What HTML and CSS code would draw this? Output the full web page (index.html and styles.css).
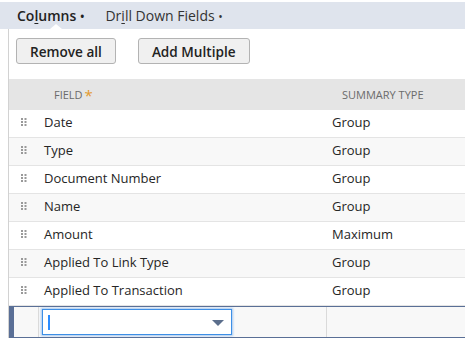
FILE: index.html
```html
<!DOCTYPE html>
<html lang="en">
<head>
  <meta charset="UTF-8" />
  <title>Columns</title>
  <link rel="stylesheet" href="styles.css">
</head>
<body>
  <nav class="tabs">
    <div class="tab active">Co<u>l</u>umns <span class="dot">•</span></div>
    <div class="tab">Dr<u>i</u>ll Down Fields <span class="dot">•</span></div>
  </nav>

  <section class="panel">
    <div class="toolbar">
      <button class="btn">Remove all</button>
      <button class="btn">Add Multiple</button>
    </div>

    <div class="grid">
      <div class="row head">
        <div class="cell"></div>
        <div class="cell">Field<span class="req">*</span></div>
        <div class="cell">Summary Type</div>
      </div>
      <div class="row"><div class="cell handle"><span class="grip"></span></div><div class="cell">Date</div><div class="cell">Group</div></div>
      <div class="row"><div class="cell handle"><span class="grip"></span></div><div class="cell">Type</div><div class="cell">Group</div></div>
      <div class="row"><div class="cell handle"><span class="grip"></span></div><div class="cell">Document Number</div><div class="cell">Group</div></div>
      <div class="row"><div class="cell handle"><span class="grip"></span></div><div class="cell">Name</div><div class="cell">Group</div></div>
      <div class="row"><div class="cell handle"><span class="grip"></span></div><div class="cell">Amount</div><div class="cell">Maximum</div></div>
      <div class="row"><div class="cell handle"><span class="grip"></span></div><div class="cell">Applied To Link Type</div><div class="cell">Group</div></div>
      <div class="row"><div class="cell handle"><span class="grip"></span></div><div class="cell">Applied To Transaction</div><div class="cell">Group</div></div>
      <div class="row editing">
        <div class="cell handle"></div>
        <div class="cell">
          <div class="select">
            <span class="caret"></span>
            <svg class="arrow" width="12" height="6" viewBox="0 0 12 6"><path d="M0 0h12L6 6z" fill="#5b6e8c"/></svg>
          </div>
        </div>
        <div class="cell"></div>
      </div>
    </div>
  </section>
</body>
</html>
```

FILE: styles.css
```css
:root {
  --tab-bg: #dfe4ed;
  --line: #e4e4e4;
  --text: #262626;
  --muted: #6b6b6b;
  --edit: #5a6f96;
  --focus: #3d8fe6;
}

* {
  margin: 0;
  padding: 0;
  box-sizing: border-box;
}

body {
  font-family: 'Open Sans', sans-serif;
  color: var(--text);
  background: #fff;
  width: 465px;
  height: 338px;
  overflow: hidden;
}

.tabs {
  margin-top: 2px;
  height: 27px;
  background: var(--tab-bg);
  display: flex;
  align-items: center;
  padding-left: 17px;
  gap: 21px;
  font-size: 14px;
}

.tab {
  position: relative;
  color: #333;
  white-space: nowrap;
}

.tab u {
  text-decoration-thickness: 1px;
  text-underline-offset: 2px;
}

.tab .dot {
  font-size: 12px;
}

.tab.active {
  font-weight: 600;
  color: #222;
}

.tab.active::after {
  content: "";
  position: absolute;
  left: 33px;
  bottom: -4px;
  border: 6px solid transparent;
  border-bottom: 5px solid #fff;
  border-top: 0;
}

.panel {
  margin-left: 8px;
  border-left: 1px solid #d2d2d2;
  height: 309px;
}

.toolbar {
  display: flex;
  gap: 22px;
  padding: 9px 7px 15px;
}

.btn {
  height: 26px;
  padding: 0 13px;
  font-family: 'Open Sans', sans-serif;
  font-size: 13.6px;
  font-weight: 600;
  color: #222;
  background: #f0f0f0;
  border: 1px solid #b3b3b3;
  border-radius: 3px;
}

.grid {
  width: 470px;
  font-size: 13px;
}

.row {
  display: grid;
  grid-template-columns: 29px 288px 1fr;
  height: 28px;
  border-bottom: 1px solid var(--line);
}

.row:nth-child(odd) {
  background: #f8f8f8;
}

.cell {
  display: flex;
  align-items: center;
  padding: 0 0 3px 6px;
  white-space: nowrap;
}

.row.head {
  height: 31px;
  background: #e5e5e5;
  border-bottom: 0;
  font-size: 11px;
  color: var(--muted);
  text-transform: uppercase;
}

.row.head .cell {
  padding-left: 16px;
  padding-bottom: 1px;
}

.req {
  color: #e39a2d;
  font-size: 15px;
  margin-left: 2px;
  align-self: flex-start;
  margin-top: 6px;
}

.cell.handle {
  padding: 0 0 3px 12px;
}

/* 2 x 3 drag dots */
.grip {
  display: block;
  width: 8px;
  height: 8px;
  position: relative;
}

.grip::before {
  content: "";
  position: absolute;
  left: 0;
  top: 0;
  width: 2px;
  height: 2px;
  background: #999;
  box-shadow: 3.5px 0 #999, 0 3px #999, 3.5px 3px #999, 0 6px #999, 3.5px 6px #999;
}

.row.editing {
  height: 32px;
  background: #f8f8f8;
  border-top: 1px solid var(--edit);
  border-bottom: 1px solid var(--edit);
}

.row.editing .cell {
  padding: 0 0 0 3px;
  border-left: 1px solid #dadada;
}

.row.editing .cell.handle {
  border-left: 5px solid var(--edit);
}

.select {
  position: relative;
  width: 190px;
  height: 26px;
  background: #fff;
  border: 1px solid var(--focus);
  box-shadow: 0 0 2px 1px rgba(61, 143, 230, 0.45);
}

.caret {
  position: absolute;
  left: 5px;
  top: 5px;
  width: 2px;
  height: 15px;
  background: #2b8cff;
}

.arrow {
  position: absolute;
  right: 7px;
  top: 10px;
}
```
